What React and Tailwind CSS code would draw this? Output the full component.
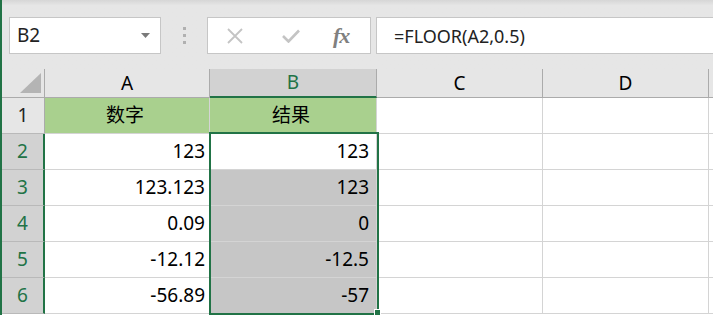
import React from "react";

const F = { fontFamily: '"Noto Sans", "Noto Sans CJK SC", sans-serif' };

function Row({ n, sel, cells }) {
  return (
    <div className="flex h-[36px]">
      <div
        className={
          "w-[43px] shrink-0 flex items-center justify-center text-[19px] border-b " +
          (sel
            ? "bg-[#d2d2d2] text-[#217346] border-r-2 border-r-[#217346] border-b-[#b9b9b9]"
            : "bg-[#e6e6e6] text-[#222] border-r border-r-[#ababab] border-b-[#b9b9b9]")
        }
      >
        {n}
      </div>
      {cells}
    </div>
  );
}

function Cell({ w, children, bg = "bg-white", align = "justify-end", className = "" }) {
  return (
    <div
      className={`${w} shrink-0 h-full flex items-center ${align} ${bg} border-r border-b border-[#d4d4d4] pr-[4px] text-[19px] text-black ${className}`}
    >
      {children}
    </div>
  );
}

export default function App() {
  const data = [
    ["123", "123", false],
    ["123.123", "123", true],
    ["0.09", "0", true],
    ["-12.12", "-12.5", true],
    ["-56.89", "-57", true],
  ];
  return (
    <div className="w-[713px] h-[315px] overflow-hidden bg-white border-l-2 border-[#217346] relative" style={F}>
      {/* toolbar */}
      <div className="h-[69px] bg-[#e6e6e6] bg-gradient-to-b from-[#d6d6d6] from-0% to-[#e6e6e6] to-[8%] flex items-start pt-[17px] pl-[7px]">
        <div className="w-[152px] h-[37px] bg-white border border-[#c6c6c6] flex items-center pl-[7px] pr-[10px] justify-between">
          <span className="text-[19px] text-[#222] leading-none">B2</span>
          <svg width="9" height="5" viewBox="0 0 9 5">
            <path d="M0 0 H9 L4.5 5 Z" fill="#7a7a7a" />
          </svg>
        </div>
        <div className="w-[46px] flex flex-col items-center gap-[4px] pt-[10px]">
          <div className="w-[3px] h-[3px] bg-[#b0b0b0]" />
          <div className="w-[3px] h-[3px] bg-[#b0b0b0]" />
          <div className="w-[3px] h-[3px] bg-[#b0b0b0]" />
        </div>
        <div className="w-[164px] h-[37px] bg-white border border-[#c6c6c6] flex items-center">
          <svg className="ml-[19px]" width="16" height="16" viewBox="0 0 16 16">
            <path d="M1 1 L15 15 M15 1 L1 15" stroke="#c4c4c4" strokeWidth="1.8" />
          </svg>
          <svg className="ml-[39px]" width="18" height="14" viewBox="0 0 18 14">
            <path d="M1 7 L6.5 12.5 L17 1.5" stroke="#c4c4c4" strokeWidth="2.6" fill="none" />
          </svg>
          <span
            className="ml-[33px] text-[22px] italic font-bold text-[#808080] leading-none tracking-[-1px]"
            style={{ fontFamily: '"Liberation Serif", serif' }}
          >
            fx
          </span>
        </div>
        <div className="ml-[5px] flex-1 h-[37px] bg-white border border-r-0 border-[#c6c6c6] flex items-center pl-[17px]">
          <span className="text-[18px] text-[#222] leading-none">=FLOOR(A2,0.5)</span>
        </div>
      </div>

      {/* header row */}
      <div className="flex h-[29px]">
        <div className="w-[43px] shrink-0 bg-[#e6e6e6] border-r border-b border-[#ababab] flex items-end justify-end pr-[3px] pb-[4px]">
          <svg width="21" height="20" viewBox="0 0 21 20">
            <path d="M0 20 H21 V0 Z" fill="#b4b4b4" />
          </svg>
        </div>
        <div className="w-[165px] shrink-0 bg-[#e6e6e6] border-r border-b border-[#ababab] flex items-center justify-center text-[19px] text-black">
          A
        </div>
        <div className="w-[167px] shrink-0 bg-[#d2d2d2] border-r border-r-[#ababab] border-b-2 border-b-[#217346] flex items-center justify-center text-[19px] text-[#217346]">
          B
        </div>
        <div className="w-[166px] shrink-0 bg-[#e6e6e6] border-r border-b border-[#ababab] flex items-center justify-center text-[19px] text-black">
          C
        </div>
        <div className="w-[166px] shrink-0 bg-[#e6e6e6] border-r border-b border-[#ababab] flex items-center justify-center text-[19px] text-black">
          D
        </div>
        <div className="flex-1 bg-[#e6e6e6] border-b border-[#ababab]" />
      </div>

      <Row
        n="1"
        sel={false}
        cells={
          <>
            <Cell w="w-[165px]" bg="bg-[#a9d08e]" align="justify-center" className="pr-0">数字</Cell>
            <Cell w="w-[167px]" bg="bg-[#a9d08e]" align="justify-center" className="pr-0">结果</Cell>
            <Cell w="w-[166px]" />
            <Cell w="w-[166px]" />
            <Cell w="flex-1" className="border-r-0" />
          </>
        }
      />
      {data.map(([a, b, s], i) => (
        <Row
          key={i}
          n={String(i + 2)}
          sel
          cells={
            <>
              <Cell w="w-[165px]">{a}</Cell>
              <Cell w="w-[167px]" bg={s ? "bg-[#c6c6c6]" : "bg-white"} className="pr-[7px]">{b}</Cell>
              <Cell w="w-[166px]" />
              <Cell w="w-[166px]" />
              <Cell w="flex-1" className="border-r-0" />
            </>
          }
        />
      ))}

      {/* selection overlay */}
      <div className="absolute left-[207px] top-[132px] w-[170px] h-[183px] border-2 border-[#217346] pointer-events-none" />
      <div className="absolute left-[372px] top-[309px] w-[7px] h-[7px] bg-[#217346] border border-white" />
    </div>
  );
}
